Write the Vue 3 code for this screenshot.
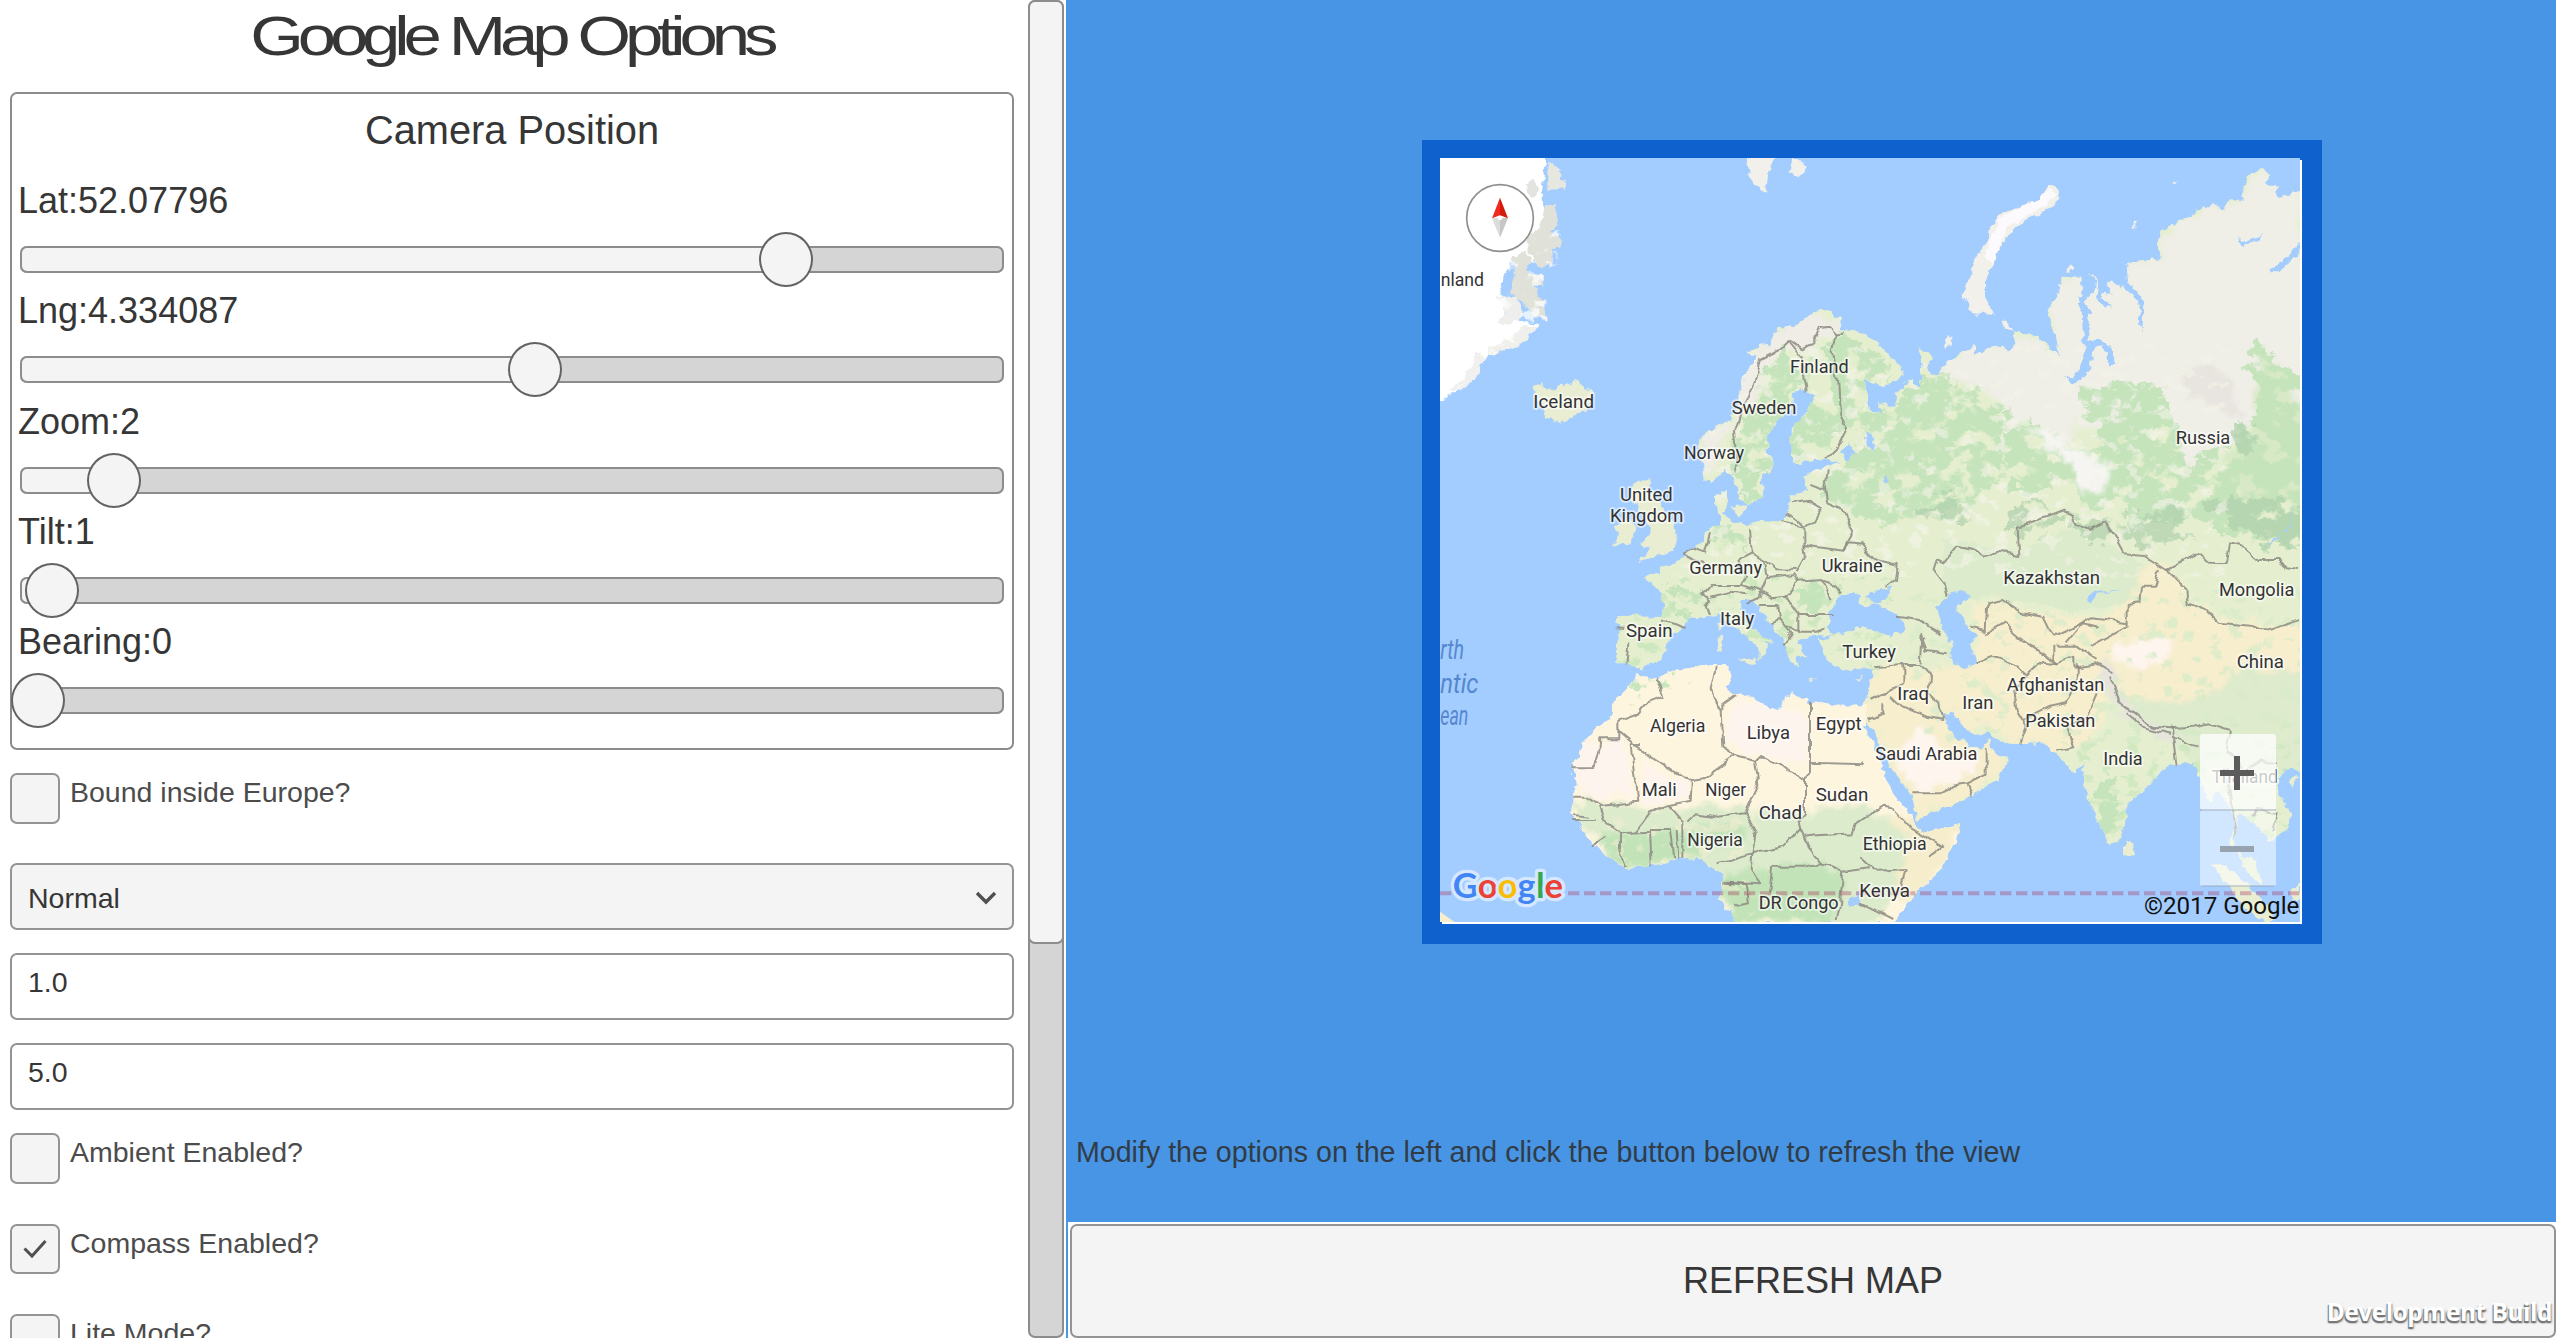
<script setup>
const sliders = [
  { label: 'Lat:52.07796', at: 766 },
  { label: 'Lng:4.334087', at: 515 },
  { label: 'Zoom:2', at: 94 },
  { label: 'Tilt:1', at: 32 },
  { label: 'Bearing:0', at: 18 },
]

const toggles = [
  { label: 'Ambient Enabled?', on: false },
  { label: 'Compass Enabled?', on: true },
  { label: 'Lite Mode?', on: false },
]

// Coastlines in map units (three units per screen pixel)
const eurasia =
  '1250,540 1295,570 1290,598 1330,600 1380,625 1400,640 1440,675 1475,710 1480,735 1460,752 1410,768 1365,750 1368,790 1380,840 1415,855 1405,817 1455,828 1460,790 1495,750 1530,765 1535,700 1525,658 1555,665 1568,688 1550,705 1555,728 1585,738 1600,705 1650,670 1692,642 1698,675 1735,655 1785,645 1790,665 1817,640 1808,600 1860,610 1910,638 1947,676 1938,620 1918,600 1915,540 1948,490 1955,440 2010,440 2016,480 2003,520 2015,545 2018,620 2026,665 2005,715 1985,745 1960,742 1975,757 2010,757 2042,715 2050,660 2075,643 2090,668 2095,705 2117,705 2103,650 2065,630 2036,640 2035,590 2040,550 2025,515 2055,485 2058,450 2040,425 2062,445 2062,522 2110,537 2076,505 2080,488 2106,492 2090,465 2105,456 2137,470 2180,505 2190,540 2186,580 2198,605 2200,500 2155,460 2150,400 2255,385 2240,345 2260,300 2310,270 2370,238 2425,222 2440,240 2467,207 2502,212 2500,180 2515,140 2552,115 2580,135 2562,162 2602,172 2602,203 2670,186 2690,1925 2632,1912 2605,1945 2605,1990 2642,2050 2635,2090 2590,2132 2578,2138 2535,2080 2490,2055 2470,2130 2492,2170 2540,2196 2557,2272 2515,2235 2490,2185 2455,2140 2480,2082 2450,2015 2425,1985 2395,2012 2380,1975 2365,1935 2350,1895 2300,1905 2265,1915 2235,1950 2180,2000 2150,2025 2145,2085 2128,2130 2100,2148 2080,2110 2050,2040 2025,1980 2018,1900 1990,1928 1960,1895 1930,1865 1905,1840 1830,1842 1760,1832 1740,1808 1695,1815 1655,1785 1635,1750 1602,1750 1612,1790 1640,1838 1658,1828 1680,1855 1715,1855 1735,1825 1745,1860 1795,1890 1760,1950 1680,2000 1520,2070 1508,2000 1450,1925 1415,1860 1392,1800 1362,1775 1352,1735 1372,1700 1390,1612 1350,1612 1300,1622 1250,1590 1228,1540 1225,1518 1180,1525 1165,1535 1175,1560 1190,1582 1162,1580 1167,1612 1142,1598 1120,1540 1105,1510 1085,1480 1050,1450 1035,1412 1012,1406 990,1415 992,1442 1015,1480 1050,1508 1090,1537 1066,1533 1072,1562 1046,1594 1045,1555 1008,1520 970,1490 940,1462 900,1455 870,1465 832,1460 825,1492 785,1515 768,1560 750,1590 710,1608 680,1620 650,1600 620,1600 617,1560 630,1500 618,1462 680,1458 752,1465 762,1420 745,1378 705,1345 722,1330 750,1335 750,1310 790,1303 830,1268 870,1240 890,1203 930,1185 930,1160 915,1120 920,1095 950,1085 955,1120 940,1150 962,1175 1000,1185 1050,1172 1120,1170 1135,1140 1140,1100 1170,1088 1198,1085 1182,1045 1215,1017 1250,1012 1290,1000 1250,985 1190,998 1145,1000 1142,960 1142,895 1190,850 1210,800 1185,775 1152,790 1150,830 1100,870 1075,920 1073,970 1095,1005 1060,1040 1055,1100 1020,1125 990,1110 975,1060 965,1028 940,1020 905,1060 880,1050 877,1010 865,940 890,905 960,870 985,820 1000,740 1040,680 1008,672 1040,650 1080,640 1100,595 1150,590 1190,560 1215,545'

const africa =
  '680,1635 740,1645 790,1620 860,1610 915,1605 955,1605 965,1640 950,1670 975,1695 1030,1700 1052,1725 1110,1740 1120,1700 1150,1690 1200,1715 1290,1727 1375,1725 1362,1785 1382,1830 1412,1885 1427,1940 1452,1998 1492,2042 1515,2075 1532,2110 1650,2085 1640,2132 1590,2222 1500,2310 1450,2380 980,2380 975,2365 930,2310 940,2240 910,2215 870,2190 830,2180 780,2195 720,2207 650,2215 590,2180 550,2140 520,2100 482,2050 490,1990 500,1960 485,1915 520,1840 550,1798 600,1770 615,1710 650,1680'

const northTundra =
  '1600,705 1650,670 1692,642 1785,645 1808,600 1860,610 1947,676 1915,540 1955,440 2010,440 2150,400 2255,385 2240,345 2310,270 2502,200 2552,115 2670,186 2700,840 2600,770 2550,755 2530,870 2450,960 2330,1010 2290,900 2260,880 2180,910 2080,900 2010,880 1960,960 1900,880 1830,900 1790,960 1775,820 1700,770 1600,740'

const forests = [
  '1230,640 1300,605 1400,660 1440,740 1380,760 1380,840 1470,830 1510,765 1600,730 1700,780 1780,830 1790,1000 1740,1100 1600,1150 1400,1180 1260,1130 1250,1030 1340,960 1290,850 1270,700',
  '1010,860 1040,720 1120,690 1210,660 1200,770 1150,790 1150,830 1090,880 1070,960 1090,1010 1050,1100 1010,1125 980,1080 985,960',
  '1150,990 1145,890 1210,830 1290,840 1310,900 1250,985',
  '1790,860 1900,860 1960,960 2010,990 2100,930 2030,850 2010,780 2100,770 2260,760 2300,870 2330,1000 2450,960 2530,870 2560,760 2500,700 2540,630 2590,680 2700,740 2700,1240 2500,1230 2380,1180 2230,1190 2100,1140 1960,1080 1800,1080',
  '760,1400 830,1370 880,1400 860,1440 780,1440',
  '900,1210 1000,1200 1010,1270 920,1250',
  '2040,1960 2120,1960 2145,2060 2110,2145 2070,2090',
  '1160,1390 1240,1360 1260,1440 1180,1440',
]
const darkForests = [
  '2350,1120 2480,1100 2700,1105 2700,1260 2560,1240 2440,1150',
  '1800,1140 1880,1100 1960,1160 2150,1170 2330,1130 2350,1230 2230,1250 2080,1230 1960,1180 1870,1220 1800,1210',
  '1520,1160 1600,1090 1690,1140 1640,1170',
  '2480,900 2540,880 2530,970 2470,970',
]
const deserts = [
  '1600,1600 1660,1615 1700,1600 1690,1420 1760,1410 1900,1450 2050,1460 2150,1440 2200,1310 2280,1300 2340,1420 2450,1470 2600,1480 2700,1470 2700,1620 2500,1620 2420,1680 2250,1730 2150,1700 2080,1620 2080,1780 2000,1860 1930,1865 1830,1842 1740,1808 1655,1785 1600,1750 1500,1680 1540,1620',
  '1352,1735 1390,1612 1530,1610 1600,1730 1612,1790 1658,1828 1735,1825 1795,1890 1680,2000 1520,2070 1450,1925 1392,1800',
]
const paleSands = [
  '1450,1880 1530,1800 1620,1880 1700,1870 1710,1930 1620,1960 1520,1990',
  '2100,1560 2200,1520 2290,1530 2250,1600 2160,1620',
  '500,1840 620,1830 650,1860 680,2000 520,2000 490,1940',
  '960,1710 1100,1740 1190,1740 1200,1900 1100,1890 950,1840',
  '700,1900 830,1950 830,2000 700,2010',
]
const africaSavanna =
  '482,2010 560,2020 800,2030 1000,2040 1180,2050 1350,2020 1400,2060 1400,2380 980,2380 930,2310 940,2240 830,2180 650,2215 550,2140'
const africaForest = [
  '550,2130 640,2110 760,2110 880,2090 880,2180 830,2180 650,2215',
  '880,2080 1000,2080 1010,2130 920,2140',
  '940,2220 1100,2210 1250,2200 1310,2250 1250,2380 990,2380 935,2300',
]

const islands = [
  '370,770 395,755 412,782 440,770 500,752 522,770 550,790 530,840 455,875 408,860 400,832 372,802',
  '690,1052 722,1045 715,1082 745,1100 760,1140 790,1185 802,1230 788,1262 740,1280 682,1294 720,1260 690,1243 720,1210 712,1180 690,1140 660,1108 664,1072',
  '615,1190 650,1160 676,1190 665,1235 608,1252 622,1222',
  '990,1585 1038,1583 1034,1607 1010,1600',
  '920,1520 940,1518 935,1560 920,1562',
  '925,1480 937,1475 935,1505',
  '1190,1645 1222,1645 1205,1650',
  '1335,1650 1360,1640 1350,1654',
  '2145,2130 2165,2140 2172,2175 2145,2180',
  '2405,2200 2450,2210 2510,2260 2555,2310 2590,2345 2590,2376 2560,2376 2500,2330 2440,2250',
  '2640,2290 2670,2255 2670,2310 2650,2310',
  '2633,1950 2665,1940 2650,1968',
  '962,1130 1000,1130 1020,1120 985,1158',
]

const tundraIslands = [
  '1950,180 1935,165 1910,175 1895,200 1830,230 1780,250 1740,290 1735,330 1700,380 1675,450 1655,490 1690,550 1755,555 1725,500 1725,450 1750,400 1775,340 1830,280 1880,255 1945,215',
  '1010,80 1020,140 1065,195 1075,130 1095,80',
  '1145,80 1192,108 1170,140 1135,130',
  '1602,630 1612,616 1627,625 1625,645 1605,650',
  '1970,410 1985,402 1993,415 1985,427 1970,420',
  '1775,575 1790,575 1807,600 1790,598',
  '2168,275 2176,275 2176,298 2168,295',
  '2288,155 2305,148 2295,160',
]

const lakes = [
  '1290,1398 1320,1386 1350,1402 1345,1425 1375,1430 1395,1420 1420,1430 1480,1470 1486,1500 1440,1517 1400,1505 1350,1490 1310,1505 1270,1514 1250,1495 1262,1440',
  '1365,1395 1395,1385 1442,1372 1425,1410 1400,1420 1385,1412',
  '1580,1430 1620,1392 1662,1378 1682,1400 1645,1425 1640,1440 1670,1490 1705,1514 1680,1545 1700,1602 1660,1615 1622,1585 1625,1540 1597,1490',
  '1365,905 1385,910 1395,960 1375,950',
  '1290,970 1310,940 1335,970 1315,995',
  '1425,1040 1440,1050 1435,1062 1422,1055',
  '2033,1400 2050,1385 2130,1382 2060,1392 2042,1422',
  '2480,320 2500,340 2560,310 2550,325 2500,350 2490,345',
  '2580,420 2620,395 2670,340 2670,370 2620,410 2582,435',
  '2650,1130 2640,1190 2570,1250 2600,1232 2640,1180',
  '1320,2300 1350,2290 1350,2325 1320,2330',
  '1210,1520 1235,1530 1270,1522 1235,1515',
]

const borders = [
  'M975,1030 L985,990 978,900 1000,830 1025,770 1050,690 1110,660 1140,630 1180,655 1210,640 1230,595 1260,590 1280,610 1305,608',
  'M1135,630 L1175,680 1190,785',
  'M1280,610 L1268,660 1285,760 1290,850 1312,895 1285,950 1245,988',
  'M1250,1015 L1245,1060 1255,1120 1300,1140 1330,1205 1310,1240 1300,1262 1180,1245',
  'M1195,1065 L1245,1080 M1140,1120 L1200,1112 1240,1135 M1130,1150 L1160,1165 1180,1187 1215,1175 1235,1140 M1110,1172 L1180,1187 1180,1245 1185,1285 1160,1330',
  'M1020,1190 L1025,1270 1060,1290 1100,1318 1160,1320 M900,1210 L885,1270 850,1258 820,1270 M820,1270 L880,1305 M1025,1270 L985,1290 1005,1345 995,1365 905,1365 880,1395 900,1410 890,1425 900,1455',
  'M995,1365 L1055,1385 1050,1400 1010,1415 M900,1400 L960,1385 1010,1390 M1060,1290 L1070,1340 1050,1385 1085,1405 1125,1400 1165,1355 1150,1335 1070,1345',
  'M1165,1355 L1235,1350 1270,1365 1290,1390 M1235,1350 L1265,1410 M1125,1400 L1165,1455 1265,1455 M1165,1455 L1165,1505 1220,1505 1240,1495',
  'M1045,1425 L1105,1425 1110,1470 1080,1480 M1110,1470 L1145,1510 1120,1540 M1125,1490 L1165,1500',
  'M750,1465 L830,1487 M620,1495 L640,1497 M655,1540 L650,1600',
  'M1300,1262 L1315,1240 1365,1245 M1350,1235 L1400,1290 1460,1305 1455,1350 1430,1370',
  'M1610,1400 L1600,1360 1570,1320 1580,1290 1600,1300 1640,1250 1690,1260 1720,1280 1770,1265 1825,1275 1820,1190 1840,1185 1960,1142 1990,1155 2000,1180 2040,1200 2085,1180 2110,1215 2140,1270 2200,1275 2270,1320 2370,1270 2400,1298 2450,1300 2460,1240 2500,1250 2545,1290 2600,1290 2630,1315 2670,1320',
  'M2270,1320 L2325,1370 2330,1420 2390,1440 2425,1475 2530,1485 2570,1502 2670,1470',
  'M2250,1320 L2235,1370 2190,1370 2185,1420 2150,1425 2150,1490 2040,1550 M2150,1480 L2045,1465 1975,1500 1930,1520 1900,1460 1840,1450 1780,1410 1735,1420 1730,1500 1680,1490 M1730,1510 L1780,1480 1840,1530 1900,1570 1940,1600 1990,1580 1990,1610 2060,1600 2110,1630',
  'M1940,1550 L2000,1550 2060,1590 M1970,1540 L2020,1480 2060,1490 M1930,1590 L1930,1550',
  'M1700,1600 L1750,1580 1820,1610 1850,1640 1810,1680 1820,1740 1850,1790 1830,1845 M1850,1640 L1900,1595 1940,1600 M2000,1600 L2000,1660 1970,1720 1920,1730 1840,1770',
  'M2060,1690 L2030,1760 1970,1790 1990,1855 1945,1865 M2100,1640 L2130,1720 2170,1745 2230,1790 2280,1795 2350,1790 2400,1780 2460,1800',
  'M2150,1750 L2200,1790 2280,1815 M2285,1790 L2300,1910 M2285,1820 L2360,1850 M2460,1800 L2450,1860 2500,1920 2560,1890 2600,1900 M2450,1920 L2460,2020 2480,2090 2470,2120 M2530,2060 L2540,2040 2600,2050 2590,2100',
  'M1390,1612 L1480,1605 1530,1605 1560,1640 1555,1690 1590,1720 1600,1770 1550,1760 1460,1720 1440,1700 M1480,1605 L1480,1660 1380,1710 M1420,1720 L1420,1750 1375,1770',
  'M1460,1460 L1530,1470 1595,1510 M1530,1510 L1550,1560 1610,1570 M1540,1520 L1535,1600',
  'M1510,1990 L1590,1990 1640,1965 1670,1960 1685,2000 M1670,1960 L1730,1930 1730,1855',
  'M740,1645 L760,1700 710,1720 680,1755 625,1775 625,1828 568,1828 565,1870 550,1912 485,1912',
  'M625,1805 L665,1840 835,1952 M690,1845 L662,1845 682,2015 575,2028 530,2000 490,2000',
  'M835,1952 L880,1945 980,1875 940,1850 935,1745 905,1680 920,1610 M940,1745 L940,1720 975,1695',
  'M980,1875 L1035,1890 1050,1875 1185,1945 1200,1935 1200,1715 M1200,1898 L1365,1903',
  'M1185,1945 L1185,2050 1160,2080 1165,2100 1120,2150 1030,2170 M1035,1890 L1045,1960 1005,2050 930,2060 860,2050 835,2075 M845,1955 L842,2015 770,2030 720,2050 680,2105',
  'M570,2030 L585,2075 630,2110 M490,2070 L560,2070 M490,2055 L540,2060 M545,2150 L590,2120 M630,2110 L630,2160 645,2215 M630,2110 L720,2105 725,2205 M720,2100 L780,2100 790,2180 M780,2030 L820,2075 820,2180 M800,2100 L805,2180',
  'M1005,2050 L1040,2110 1030,2170 920,2200 M1030,2170 L1025,2220 1050,2260 950,2255 M1090,2210 L1080,2290 M1090,2210 L1180,2210 1240,2200 1180,2130 1165,2100 M1180,2120 L1230,2115 1330,2110 1340,2080 1370,2060',
  'M1240,2200 L1300,2225 1380,2215 M1300,2225 L1290,2320 1280,2370 M1370,2060 L1420,2030 1450,2035 1500,2090 1600,2150 1560,2180 M1350,2180 L1400,2225 1490,2220 1470,2290 M1350,2320 L1450,2370 M940,2255 L1010,2260 1020,2320 975,2330',
]

const labels = [
  ['nland', 92, 467, 130],
  ['Finland', 1140, 728, 176],
  ['Iceland', 370, 835, 182],
  ['Sweden', 965, 852, 194],
  ['Norway', 822, 986, 180],
  ['United', 630, 1113, 158],
  ['Kingdom', 600, 1177, 220],
  ['Russia', 2297, 942, 164],
  ['Germany', 838, 1331, 218],
  ['Ukraine', 1235, 1326, 183],
  ['Italy', 930, 1484, 103],
  ['Spain', 648, 1520, 140],
  ['Turkey', 1297, 1583, 161],
  ['Algeria', 720, 1806, 166],
  ['Libya', 1010, 1828, 130],
  ['Egypt', 1217, 1800, 138],
  ['Mali', 695, 1998, 105],
  ['Niger', 886, 1999, 122],
  ['Sudan', 1217, 2014, 158],
  ['Chad', 1046, 2067, 130],
  ['Nigeria', 832, 2148, 166],
  ['Ethiopia', 1358, 2160, 192],
  ['Kenya', 1348, 2302, 152],
  ['DR Congo', 1046, 2338, 240],
  ['Kazakhstan', 1780, 1363, 290],
  ['Mongolia', 2427, 1399, 226],
  ['China', 2480, 1614, 142],
  ['Afghanistan', 1790, 1683, 293],
  ['Iraq', 1462, 1710, 95],
  ['Iran', 1657, 1738, 93],
  ['Pakistan', 1846, 1790, 210],
  ['Saudi Arabia', 1396, 1890, 306],
  ['India', 2080, 1906, 118],
  ['Thailand', 2405, 1960, 198],
]
</script>

<template>
  <div class="screen">
    <aside class="options">
      <div class="scroll">
        <h1><span>Google Map Options</span></h1>

        <section class="camera">
          <h2>Camera Position</h2>
          <div v-for="s in sliders" :key="s.label" class="slider">
            <label>{{ s.label }}</label>
            <div class="track">
              <div class="fill" :style="{ width: s.at + 'px' }"></div>
              <div class="thumb" :style="{ left: s.at + 'px' }"></div>
            </div>
          </div>
        </section>

        <div class="row first">
          <div class="box"></div>
          <span class="text">Bound inside Europe?</span>
        </div>
        <div class="row">
          <div class="field select">
            <span>Normal</span>
            <svg width="24" height="16" viewBox="0 0 24 16"><path d="M3 3 12 12 21 3" fill="none" stroke="#505050" stroke-width="3.4" /></svg>
          </div>
        </div>
        <div class="row"><div class="field">1.0</div></div>
        <div class="row"><div class="field">5.0</div></div>
        <div v-for="t in toggles" :key="t.label" class="row">
          <div class="box">
            <svg v-if="t.on" width="24" height="20" viewBox="0 0 24 20"><path d="M1.5 9.5 9 17 22.500 2" fill="none" stroke="#505050" stroke-width="3" /></svg>
          </div>
          <span class="text">{{ t.label }}</span>
        </div>
      </div>
      <div class="scrollbar"><div class="handle"></div></div>
    </aside>

    <main class="view">
      <div class="frame">
        <svg class="map" width="860" height="764" viewBox="90 84 2580 2292">
          <defs>
            <filter id="coast" x="0" y="0" width="100%" height="100%">
              <feTurbulence type="fractalNoise" baseFrequency="0.045" numOctaves="2" seed="4" result="n" />
              <feDisplacementMap in="SourceGraphic" in2="n" scale="24" xChannelSelector="R" yChannelSelector="G" />
            </filter>
            <filter id="wander" x="0" y="0" width="100%" height="100%">
              <feTurbulence type="fractalNoise" baseFrequency="0.02" numOctaves="2" seed="4" result="n" />
              <feDisplacementMap in="SourceGraphic" in2="n" scale="26" xChannelSelector="R" yChannelSelector="G" />
            </filter>
            <filter id="mottle" x="0" y="0" width="100%" height="100%">
              <feTurbulence type="fractalNoise" baseFrequency="0.013 0.018" numOctaves="4" seed="9" result="n" />
              <feDisplacementMap in="SourceGraphic" in2="n" scale="110" xChannelSelector="R" yChannelSelector="G" result="d" />
              <feColorMatrix in="n" type="matrix" values="0 0 0 0 1  0 0 0 0 1  0 0 0 0 1  9 0 0 0 -3.2" result="m" />
              <feComposite in="d" in2="m" operator="in" />
            </filter>
            <filter id="soft" x="-5%" y="-5%" width="110%" height="110%">
              <feTurbulence type="fractalNoise" baseFrequency="0.02" numOctaves="3" seed="2" result="n" />
              <feDisplacementMap in="SourceGraphic" in2="n" scale="70" xChannelSelector="R" yChannelSelector="G" result="d" />
              <feGaussianBlur in="d" stdDeviation="7" />
            </filter>
            <filter id="specks" x="0" y="0" width="100%" height="100%">
              <feTurbulence type="fractalNoise" baseFrequency="0.02 0.028" numOctaves="4" seed="21" result="n" />
              <feColorMatrix in="n" type="matrix" values="0 0 0 0 1  0 0 0 0 1  0 0 0 0 1  0 9 0 0 -5.2" result="m" />
              <feComposite in="SourceGraphic" in2="m" operator="in" />
            </filter>
            <clipPath id="asiaClip"><polygon :points="eurasia" /></clipPath>
            <clipPath id="africaClip"><polygon :points="africa" /></clipPath>
          </defs>

          <rect x="90" y="84" width="2580" height="2292" fill="#a3ccff" />

          <g filter="url(#coast)">
            <g clip-path="url(#asiaClip)">
              <rect x="500" y="84" width="2200" height="2292" fill="#e5efcf" />
              <polygon points="1600,1220 1830,1270 2000,1180 2140,1270 2250,1330 2180,1420 2000,1440 1750,1400 1600,1400" fill="#dcebcb" />
              <polygon points="2200,1700 2420,1640 2600,1580 2700,1600 2700,1950 2350,1900 2250,1800 2150,1750" fill="#deebcd" />
              <g filter="url(#soft)">
                <polygon :points="northTundra" fill="#efeee7" />
                <polygon points="1000,700 1060,640 1110,590 1200,550 1300,570 1280,620 1180,670 1080,690 1020,820 960,900 900,1030 860,1010 870,920 970,860" fill="#efede6" />
                <polygon points="2540,640 2600,700 2640,800 2700,830 2700,1130 2500,1120 2450,1000 2530,880 2550,760" fill="#d7e9c6" />
                <polygon v-for="p in deserts" :key="p" :points="p" fill="#f7eecd" />
                <polygon v-for="p in paleSands" :key="p" :points="p" fill="#fef5ee" />
                <polygon points="2060,1590 2110,1610 2160,1740 2280,1800 2360,1790 2360,1810 2260,1820 2140,1760 2090,1680" fill="#e6e4dc" />
                <polygon points="2310,730 2400,700 2470,760 2500,850 2420,850 2340,800" fill="#e8e4df" />
              </g>
              <g filter="url(#mottle)">
                <polygon v-for="p in forests" :key="p" :points="p" fill="#c5e4bb" />
              </g>
              <g filter="url(#mottle)" opacity=".7">
                <polygon v-for="p in darkForests" :key="p" :points="p" fill="#b0d1ad" />
              </g>
              <polygon points="1840,900 1930,890 1990,960 2070,1000 2110,1000 2080,1080 2010,1090 1980,1010 1900,940" fill="#f6f5f2" filter="url(#soft)" />
              <rect x="550" y="640" width="1900" height="700" fill="#f4f3e8" opacity=".6" filter="url(#specks)" />
              <rect x="550" y="1340" width="900" height="280" fill="#c3e4b8" opacity=".7" filter="url(#specks)" />
              <rect x="1960" y="1780" width="740" height="500" fill="#c3e4b8" opacity=".6" filter="url(#specks)" />
              <rect x="1500" y="1380" width="1200" height="460" fill="#d9ebca" opacity=".8" filter="url(#specks)" />
            </g>
            <g clip-path="url(#africaClip)">
              <rect x="470" y="1590" width="1200" height="800" fill="#fef5df" />
              <g filter="url(#soft)">
                <polygon v-for="p in paleSands.slice(2)" :key="p" :points="p" fill="#fef4ee" />
                <polygon :points="africaSavanna" fill="#dcebcc" />
                <polygon points="1450,2060 1660,2070 1640,2150 1520,2300 1460,2330 1400,2200" fill="#f6edcc" />
                <polygon points="1360,2060 1420,2050 1500,2150 1420,2380 1290,2380 1330,2200" fill="#dbebcb" />
                <polygon v-for="p in africaForest" :key="p" :points="p" fill="#c2e3b8" />
              </g>
              <polygon points="600,1750 680,1640 930,1600 850,1650 740,1700" fill="#c8e6bc" filter="url(#specks)" />
              <rect x="470" y="2060" width="600" height="300" fill="#f6eed2" opacity=".5" filter="url(#specks)" />
            </g>
            <polygon v-for="p in islands" :key="p" :points="p" fill="#e9eed3" />
            <polygon v-for="p in tundraIslands" :key="p" :points="p" fill="#f1f0ea" />
            <polyline points="1930,185 1900,215 1830,250 1780,280 1755,340 1735,390" fill="none" stroke="#fcfafc" stroke-width="30" stroke-linejoin="round" />
            <polygon v-for="p in lakes" :key="p" :points="p" fill="#a3ccff" />
          </g>

          <!-- Greenland -->
          <g filter="url(#coast)">
            <polygon points="60,50 410,50 408,95 395,190 405,260 400,330 370,400 300,400 270,470 290,560 385,585 350,630 300,655 240,675 222,690 200,735 150,780 90,812 60,812" fill="#fff" />
            <polygon points="418,95 452,120 445,145 467,150 465,180 435,175 412,185 412,130" fill="#e6e8e0" />
            <polygon points="405,225 435,225 445,285 420,300 452,330 450,350 425,355 430,400 385,410 350,360 350,310 390,300" fill="#e0e1d8" />
            <polygon points="350,160 372,150 385,180 372,205 355,190" fill="#e3e4df" />
            <polygon points="305,380 350,365 365,400 345,420 400,440 400,470 372,465 400,510 408,565 372,565 345,520 300,490 315,430" fill="#e0e1d9" />
            <polygon points="260,500 320,500 342,555 300,580 260,580 290,545" fill="#eeefec" />
            <polygon points="345,585 385,588 350,630 300,658 240,675 232,660 300,625" fill="#efefeb" />
            <polygon points="200,665 225,680 205,735 150,782 120,780 170,740" fill="#f0f1ee" />
            <polygon points="260,360 350,340 350,220 440,220 450,400 400,430 410,570 380,600 260,670 130,790 250,600" fill="#fff" opacity=".75" filter="url(#specks)" />
          </g>
          <polygon points="60,2330 90,2345 140,2380 60,2380" fill="#f7eecd" />

          <g fill="none" stroke="#8d8b82" stroke-opacity=".85" stroke-width="6" stroke-linejoin="round" filter="url(#wander)">
            <path v-for="b in borders" :key="b" :d="b" />
          </g>

          <path d="M90 2290H2670" stroke="#a8305a" stroke-opacity=".34" stroke-width="12" stroke-dasharray="34 14" />

          <g class="ocean">
            <text x="91" y="1588" textLength="71" lengthAdjust="spacingAndGlyphs">rth</text>
            <text x="91" y="1690" textLength="114" lengthAdjust="spacingAndGlyphs">ntic</text>
            <text x="91" y="1786" textLength="84" lengthAdjust="spacingAndGlyphs">ean</text>
          </g>

          <g class="places">
            <text v-for="l in labels" :key="l[0]" :x="l[1]" :y="l[2]" :textLength="l[3]" lengthAdjust="spacingAndGlyphs">{{ l[0] }}</text>
          </g>

          <text class="brand" x="128" y="2305" textLength="331" lengthAdjust="spacingAndGlyphs"><tspan fill="#4285f4">G</tspan><tspan fill="#ea4335">o</tspan><tspan fill="#fbbc05">o</tspan><tspan fill="#4285f4">g</tspan><tspan fill="#34a853">l</tspan><tspan fill="#ea4335">e</tspan></text>

          <rect x="2370" y="1812" width="228" height="228" rx="8" fill="#fff" fill-opacity=".74" />
          <rect x="2370" y="2040" width="228" height="228" rx="8" fill="#fff" fill-opacity=".5" />
          <path d="M2370 2040h228M2376 2268h216" stroke="#90a0b0" stroke-opacity=".4" stroke-width="6" />
          <path d="M2430 1929h102M2481 1878v102" stroke="#5c5c5c" stroke-width="18" />
          <path d="M2430 2157h102" stroke="#98a3b0" stroke-width="18" />

          <text class="copy" x="2202" y="2351" textLength="466" lengthAdjust="spacingAndGlyphs">©2017 Google</text>

          <circle cx="270" cy="264" r="100" fill="#fff" stroke="#8f8f8f" stroke-width="5" />
          <path d="M270 264 246 264 270 323Z" fill="#dcdcdc" />
          <path d="M270 264 294 264 270 323Z" fill="#c6c6c6" />
          <path d="M270 203 246 265 270 256Z" fill="#f02a20" />
          <path d="M270 203 294 265 270 256Z" fill="#d41a08" />
          <circle cx="270" cy="264" r="7" fill="#fff" />
        </svg>
      </div>
      <p>Modify the options on the left and click the button below to refresh the view</p>
      <div class="action">
        <button>REFRESH MAP</button>
        <span class="build">Development Build</span>
      </div>
    </main>
  </div>
</template>

<style>
body {
  margin: 0;
  overflow: hidden;
}
</style>

<style scoped>
.screen {
  display: flex;
  width: 2556px;
  height: 1338px;
  overflow: hidden;
  background: #fff;
  color: #363636;
  font-family: "Liberation Sans", Arial, sans-serif;
}
.options {
  display: flex;
  width: 1066px;
  height: 1338px;
  overflow: hidden;
}
.scroll {
  width: 1028px;
  height: 1338px;
  padding: 0 14px 0 10px;
  box-sizing: border-box;
  overflow: hidden;
}
h1 {
  height: 92px;
  margin: 0;
  font-size: 56px;
  font-weight: 400;
  line-height: 72px;
  text-align: center;
}
h1 span {
  display: inline-block;
  letter-spacing: -4.95px;
  transform: translateX(-1px) scaleX(1.23);
}
.camera {
  height: 657.5px;
  box-sizing: border-box;
  border: 2px solid #8c8c8c;
  border-radius: 7px;
  padding: 0 8px;
}
h2 {
  margin: 0;
  font-size: 39.800px;
  font-weight: 400;
  line-height: 72px;
  text-align: center;
}
.slider {
  height: 110.3px;
}
.slider label {
  display: block;
  height: 66px;
  margin-left: -2px;
  font-size: 36px;
  line-height: 69.500px;
}
.track {
  position: relative;
  height: 27px;
  margin-top: 14px;
  box-sizing: border-box;
  border-radius: 7px;
  background: #d5d5d5;
  box-shadow: inset 0 0 0 2px #8c8c8c;
}
.fill {
  height: 27px;
  border-radius: 7px;
  background: #f4f4f4;
  box-shadow: inset 0 0 0 2px #8c8c8c;
}
.thumb {
  position: absolute;
  top: -14px;
  width: 54px;
  height: 55px;
  margin-left: -27px;
  box-sizing: border-box;
  border: 2px solid #636363;
  border-radius: 50%;
  background: #f4f4f4;
}
.row {
  display: flex;
  height: 90.05px;
  align-items: flex-start;
  font-size: 28.5px;
}
.row.first {
  margin-top: 23.8px;
}
.box {
  display: flex;
  align-items: center;
  justify-content: center;
  width: 50px;
  height: 50.500px;
  box-sizing: border-box;
  border: 2px solid #949494;
  border-radius: 7px;
  background: #f4f4f4;
}
.text {
  margin-left: 10px;
  line-height: 39px;
  color: #4c4c4c;
}
.field {
  width: 1004px;
  height: 66.500px;
  padding: 0 16px;
  box-sizing: border-box;
  border: 2px solid #949494;
  border-radius: 7px;
  line-height: 54px;
}
.select {
  display: flex;
  align-items: center;
  justify-content: space-between;
  background: #f4f4f4;
  padding: 3px 14px 0 16px;
}
.scrollbar {
  width: 36px;
  height: 1338px;
  box-sizing: border-box;
  border: 2px solid #8c8c8c;
  border-radius: 7px;
  background: #d5d5d5;
}
.handle {
  width: 36px;
  height: 944px;
  margin: -2px 0 0 -2px;
  box-sizing: border-box;
  border: 2px solid #8c8c8c;
  border-radius: 7px;
  background: #f4f4f4;
}
.view {
  display: flex;
  flex-direction: column;
  width: 1490px;
  background: #4795e4;
}
.frame {
  width: 900px;
  height: 804px;
  margin: 140px 0 0 356px;
  padding: 18px;
  box-sizing: border-box;
  background: #0f61ce;
}
.map {
  display: block;
  box-shadow: 2px 2px 0 #fff;
}
.places text {
  font: 54px Roboto, sans-serif;
  fill: #333;
  stroke: #fff;
  stroke-opacity: 0.6;
  stroke-width: 11px;
  stroke-linejoin: round;
  paint-order: stroke;
}
.ocean text {
  font: italic 84px Roboto, sans-serif;
  fill: #5587cf;
}
.brand {
  font: 104px Lato, sans-serif;
  font-weight: 700;
  stroke: #d6e8ff;
  stroke-width: 20px;
  stroke-linejoin: round;
  paint-order: stroke;
}
.copy {
  font: 69px Roboto, sans-serif;
  fill: #111;
}
p {
  height: 96px;
  margin: 184px 0 0 10px;
  font-size: 28.600px;
  line-height: 48px;
  color: #323c46;
  white-space: nowrap;
}
.action {
  position: relative;
  height: 116px;
  margin: -2px 0 0 2px;
  padding: 2px 0 0 2px;
  box-sizing: border-box;
  background: #fff;
}
button {
  display: block;
  width: 1486px;
  height: 114px;
  padding: 0;
  border: 2px solid #949494;
  border-radius: 7px;
  background: #f4f4f4;
  color: #363636;
  font: 36px "Liberation Sans", Arial, sans-serif;
}
.build {
  position: absolute;
  right: 4px;
  bottom: 9px;
  font: 700 24.5px/34px "Open Sans", sans-serif;
  letter-spacing: -0.5px;
  color: #fff;
  text-shadow: 0 2px 1px #777, -1px 2px 1px #777, 1px 2px 2px #999;
}
</style>
